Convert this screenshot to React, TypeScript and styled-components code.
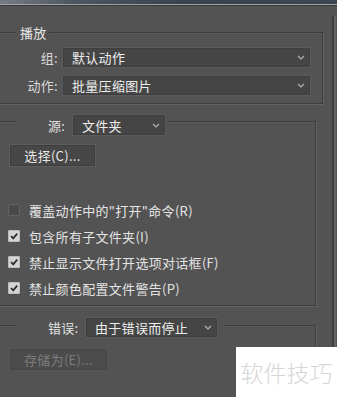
import React from "react";
import styled, { createGlobalStyle } from "styled-components";

const GlobalStyle = createGlobalStyle`
    html, body {
        margin: 0;
        padding: 0;
    }
    body {
        background: #535353;
        font-family: "Noto Sans CJK SC", "Liberation Sans", sans-serif;
        font-size: 13px;
        letter-spacing: 0.3px;
        color: #e2e2e2;
    }
    * {
        box-sizing: border-box;
    }
`;

const Chevron = () => (
    <svg width="8" height="5" viewBox="0 0 8 5">
        <polyline
            points="1,1 4,4 7,1"
            fill="none"
            stroke="#b4b4b4"
            strokeWidth="1.2"
        />
    </svg>
);

const Tick = () => (
    <svg width="10" height="10" viewBox="0 0 10 10">
        <polyline
            points="2,5 4.2,7.3 8.2,2.6"
            fill="none"
            stroke="#2e2e2e"
            strokeWidth="1.8"
        />
    </svg>
);

const App: React.FC = () => {
    return (
        <>
            <GlobalStyle />
            <Screen>
                <TitleStrip />
                <Panel>
                    <Group $width={333}>
                        <GroupHead $padLeft={4} $padRight={2}>
                            播放
                        </GroupHead>
                        <Fields>
                            <FieldRow>
                                <FieldLabel>组:</FieldLabel>
                                <Select $width={249}>
                                    <span>默认动作</span>
                                    <Chevron />
                                </Select>
                            </FieldRow>
                            <FieldRow>
                                <FieldLabel>动作:</FieldLabel>
                                <Select $width={249}>
                                    <span>批量压缩图片</span>
                                    <Chevron />
                                </Select>
                            </FieldRow>
                        </Fields>
                    </Group>

                    <Group $width={326} $gap={17} $padBottom={4}>
                        <GroupHead $padLeft={32} $padRight={1} $lift={8}>
                            <HeadLabel $width={20}>源:</HeadLabel>
                            <Select $width={94} $height={22}>
                                <span>文件夹</span>
                                <Chevron />
                            </Select>
                        </GroupHead>
                        <Button $width={87} $top={8}>
                            选择(C)...
                        </Button>
                        <CheckList>
                            <CheckRow>
                                <CheckBox $checked={false} />
                                覆盖动作中的"打开"命令(R)
                            </CheckRow>
                            <CheckRow>
                                <CheckBox $checked>
                                    <Tick />
                                </CheckBox>
                                包含所有子文件夹(I)
                            </CheckRow>
                            <CheckRow>
                                <CheckBox $checked>
                                    <Tick />
                                </CheckBox>
                                禁止显示文件打开选项对话框(F)
                            </CheckRow>
                            <CheckRow>
                                <CheckBox $checked>
                                    <Tick />
                                </CheckBox>
                                禁止颜色配置文件警告(P)
                            </CheckRow>
                        </CheckList>
                    </Group>

                    <Group $width={326} $gap={19} $padBottom={40}>
                        <GroupHead $padLeft={32} $padRight={6}>
                            <HeadLabel $width={33}>错误:</HeadLabel>
                            <Select $width={133}>
                                <span>由于错误而停止</span>
                                <Chevron />
                            </Select>
                        </GroupHead>
                        <Button $width={99} $top={10} disabled>
                            存储为(E)...
                        </Button>
                    </Group>
                </Panel>
                <Watermark>软件技巧</Watermark>
            </Screen>
        </>
    );
};

export default App;

const Screen = styled.div`
    position: relative;
    width: 337px;
    height: 397px;
    overflow: hidden;
    background: #535353;
`;
const TitleStrip = styled.div`
    height: 6px;
    background: linear-gradient(
        to right,
        #767c83 0%,
        #4d5660 22%,
        #38434f 55%,
        #3c4652 100%
    );
    border-bottom: 1px solid #3a3a3a;
    box-shadow: inset 0 -1px 0 #9ea3a8;
`;
const Panel = styled.div`
    margin-top: 10px;
    width: 334px;
    min-height: 381px;
    border-right: 2px solid #3e3e3e;
    box-shadow: 2px 0 0 #646464;
    padding-top: 16px;
    display: flex;
    flex-direction: column;
`;
const Group = styled.div<{ $width: number; $gap?: number; $padBottom?: number }>`
    margin-left: -10px;
    margin-top: ${(p) => p.$gap ?? 0}px;
    width: ${(p) => p.$width}px;
    padding-bottom: ${(p) => p.$padBottom ?? 7}px;
    border: 1px solid #3d3d3d;
    box-shadow: 1px 1px 0 #626262, inset 1px 1px 0 #5c5c5c;
    display: flex;
    flex-direction: column;
    align-items: flex-start;
`;
const GroupHead = styled.div<{ $padLeft: number; $padRight: number; $lift?: number }>`
    margin-top: -${(p) => p.$lift ?? 9}px;
    margin-left: 25px;
    padding: 0 ${(p) => p.$padRight}px 0 ${(p) => p.$padLeft}px;
    background: #535353;
    display: flex;
    align-items: center;
    gap: 4px;
    line-height: 17px;
    color: #e6e6e6;
`;
const HeadLabel = styled.span<{ $width: number }>`
    width: ${(p) => p.$width}px;
    white-space: nowrap;
    color: #e0e0e0;
`;
const Fields = styled.div`
    margin-top: 6px;
    display: flex;
    flex-direction: column;
    gap: 7px;
`;
const FieldRow = styled.div`
    display: flex;
    align-items: center;
    gap: 4px;
`;
const FieldLabel = styled.span`
    width: 67px;
    text-align: right;
    color: #dadada;
`;
const Select = styled.div<{ $width: number; $height?: number }>`
    width: ${(p) => p.$width}px;
    height: ${(p) => p.$height ?? 21}px;
    padding: 0 5px 0 9px;
    background: #454545;
    border: 1px solid #5b5b5b;
    box-shadow: inset 0 0 0 1px #3f3f3f;
    display: flex;
    align-items: center;
    justify-content: space-between;
    color: #ededed;
    line-height: 1;
`;
const Button = styled.button<{ $width: number; $top: number }>`
    margin-top: ${(p) => p.$top}px;
    margin-left: 18px;
    width: ${(p) => p.$width}px;
    height: 23px;
    padding: 0;
    background: #474747;
    border: 1px solid #5d5d5d;
    box-shadow: inset 0 0 0 1px #3e3e3e;
    font-family: inherit;
    font-size: 13px;
    letter-spacing: 0.3px;
    color: #e6e6e6;
    &:disabled {
        background: #4b4b4b;
        border-color: #565656;
        box-shadow: inset 0 0 0 1px #474747;
        color: #7c7c7c;
    }
`;
const CheckList = styled.div`
    margin-top: 30px;
    display: flex;
    flex-direction: column;
`;
const CheckRow = styled.div`
    height: 26px;
    padding-left: 17px;
    display: flex;
    align-items: center;
    gap: 9px;
    color: #e4e4e4;
`;
const CheckBox = styled.span<{ $checked: boolean }>`
    width: 12px;
    height: 12px;
    display: flex;
    align-items: center;
    justify-content: center;
    background: ${(p) => (p.$checked ? "#d4d4d4" : "#4a4a4a")};
    border: 1px solid ${(p) => (p.$checked ? "#bdbdbd" : "#626262")};
    border-radius: 1px;
`;
const Watermark = styled.div`
    position: absolute;
    right: 0;
    bottom: 0;
    width: 101px;
    height: 50px;
    background: #ffffff;
    color: #d6d6d6;
    font-size: 23px;
    font-weight: 300;
    line-height: 50px;
    text-align: center;
    letter-spacing: 0;
`;
